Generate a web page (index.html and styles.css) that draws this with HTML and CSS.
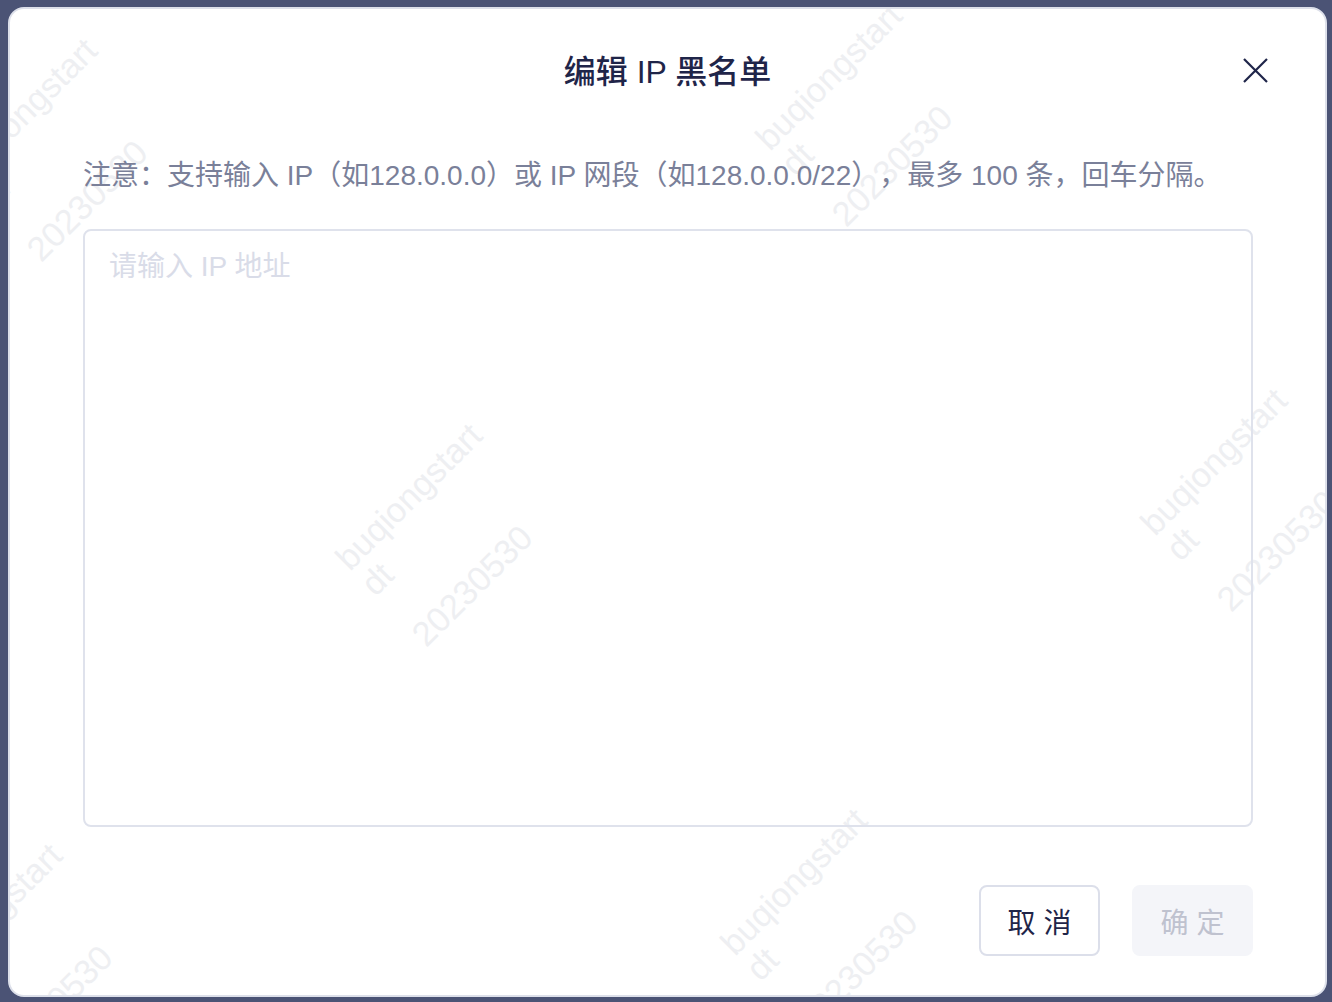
FILE: index.html
```html
<!DOCTYPE html>
<html lang="zh-CN">
<head>
    <meta charset="UTF-8">
    <meta name="viewport" content="width=device-width, initial-scale=1.0">
    <title>编辑 IP 黑名单</title>
    <link rel="stylesheet" href="styles.css">
</head>
<body>
    <div class="modal">
        <div class="watermarks">
            <div class="mark mark-1">buqiongstart<br>dt<br><br>20230530</div>
            <div class="mark mark-2">buqiongstart<br>dt<br><br>20230530</div>
            <div class="mark mark-3">buqiongstart<br>dt<br><br>20230530</div>
            <div class="mark mark-4">buqiongstart<br>dt<br><br>20230530</div>
            <div class="mark mark-5">buqiongstart<br>dt<br><br>20230530</div>
            <div class="mark mark-6">buqiongstart<br>dt<br><br>20230530</div>
        </div>

        <div class="modal-header">
            <span></span>
            <h2 class="modal-title">编辑 IP 黑名单</h2>
            <button class="close-btn" type="button" aria-label="关闭">
                <svg width="25" height="25" viewBox="0 0 25 25">
                    <path d="M1 1 L24 24 M24 1 L1 24" stroke="#1f2549" stroke-width="2.2" fill="none"/>
                </svg>
            </button>
        </div>

        <div class="modal-body">
            <p class="tip">注意：支持输入 IP（如128.0.0.0）或 IP 网段（如128.0.0.0/22），最多 100 条，回车分隔。</p>
            <textarea class="ip-input" placeholder="请输入 IP 地址"></textarea>
        </div>

        <div class="modal-footer">
            <button class="btn btn-cancel" type="button">取 消</button>
            <button class="btn btn-ok" type="button" disabled>确 定</button>
        </div>
    </div>
</body>
</html>
```

FILE: styles.css
```css
body {
    margin: 0;
    padding: 7px 0 0 8px;
    height: 1002px;
    box-sizing: border-box;
    background: #4b5375;
    font-family: "Liberation Sans", "Noto Sans CJK SC", sans-serif;
    text-spacing-trim: space-all;
    overflow: hidden;
}

.modal {
    position: relative;
    width: 1319px;
    height: 990px;
    box-sizing: border-box;
    background: #fff;
    border: 2px solid #dde0ea;
    border-radius: 16px;
    overflow: hidden;
    display: flex;
    flex-direction: column;
    padding: 39px 0 40px;
}

/* watermark layer */
.watermarks {
    position: absolute;
    inset: 0;
    pointer-events: none;
}

.mark {
    position: absolute;
    font-family: "Liberation Sans", sans-serif;
    font-size: 34.5px;
    line-height: 36px;
    color: #eeeff2;
    white-space: nowrap;
    transform-origin: 0 30px;
    transform: rotate(-45deg);
}

.mark-1 { left: -45px; top: 148px; }
.mark-2 { left: 340px; top: 533px; }
.mark-3 { left: 760px; top: 113px; }
.mark-4 { left: 725px; top: 918px; }
.mark-5 { left: 1145px; top: 498px; }
.mark-6 { left: -80px; top: 953px; }

.modal-header {
    position: relative;
    display: grid;
    grid-template-columns: 1fr auto 1fr;
    align-items: center;
    padding: 0 57px;
    height: 48px;
}

.modal-title {
    margin: 0;
    font-size: 32px;
    font-weight: 500;
    color: #1f2549;
    line-height: 48px;
}

.close-btn {
    justify-self: end;
    align-self: start;
    margin-top: 10px;
    width: 25px;
    height: 25px;
    padding: 0;
    border: none;
    background: none;
    cursor: pointer;
    display: flex;
}

.modal-body {
    position: relative;
    padding: 0 72px 0 73px;
}

.tip {
    margin: 58px 0 31px;
    font-size: 28px;
    line-height: 44px;
    color: #7a8099;
    white-space: nowrap;
}

.ip-input {
    display: block;
    width: 100%;
    height: 598px;
    box-sizing: border-box;
    padding: 14px 24px 12px;
    border: 2px solid #dfe2ec;
    border-radius: 8px;
    background: transparent;
    font-family: inherit;
    font-size: 28px;
    line-height: 44px;
    color: #1f2549;
    resize: none;
    outline: none;
}

.ip-input::placeholder {
    color: #d9dce8;
}

.modal-footer {
    position: relative;
    display: flex;
    justify-content: flex-end;
    gap: 32px;
    margin-top: 58px;
    padding: 0 72px;
}

.btn {
    width: 121px;
    height: 71px;
    box-sizing: border-box;
    border-radius: 8px;
    font-family: inherit;
    font-size: 28px;
    cursor: pointer;
}

.btn-cancel {
    background: #fff;
    border: 2px solid #dcdfea;
    color: #1f2549;
}

.btn-ok {
    background: #f4f5f9;
    border: 2px solid #f4f5f9;
    color: #bfc2cf;
    cursor: not-allowed;
}
```
